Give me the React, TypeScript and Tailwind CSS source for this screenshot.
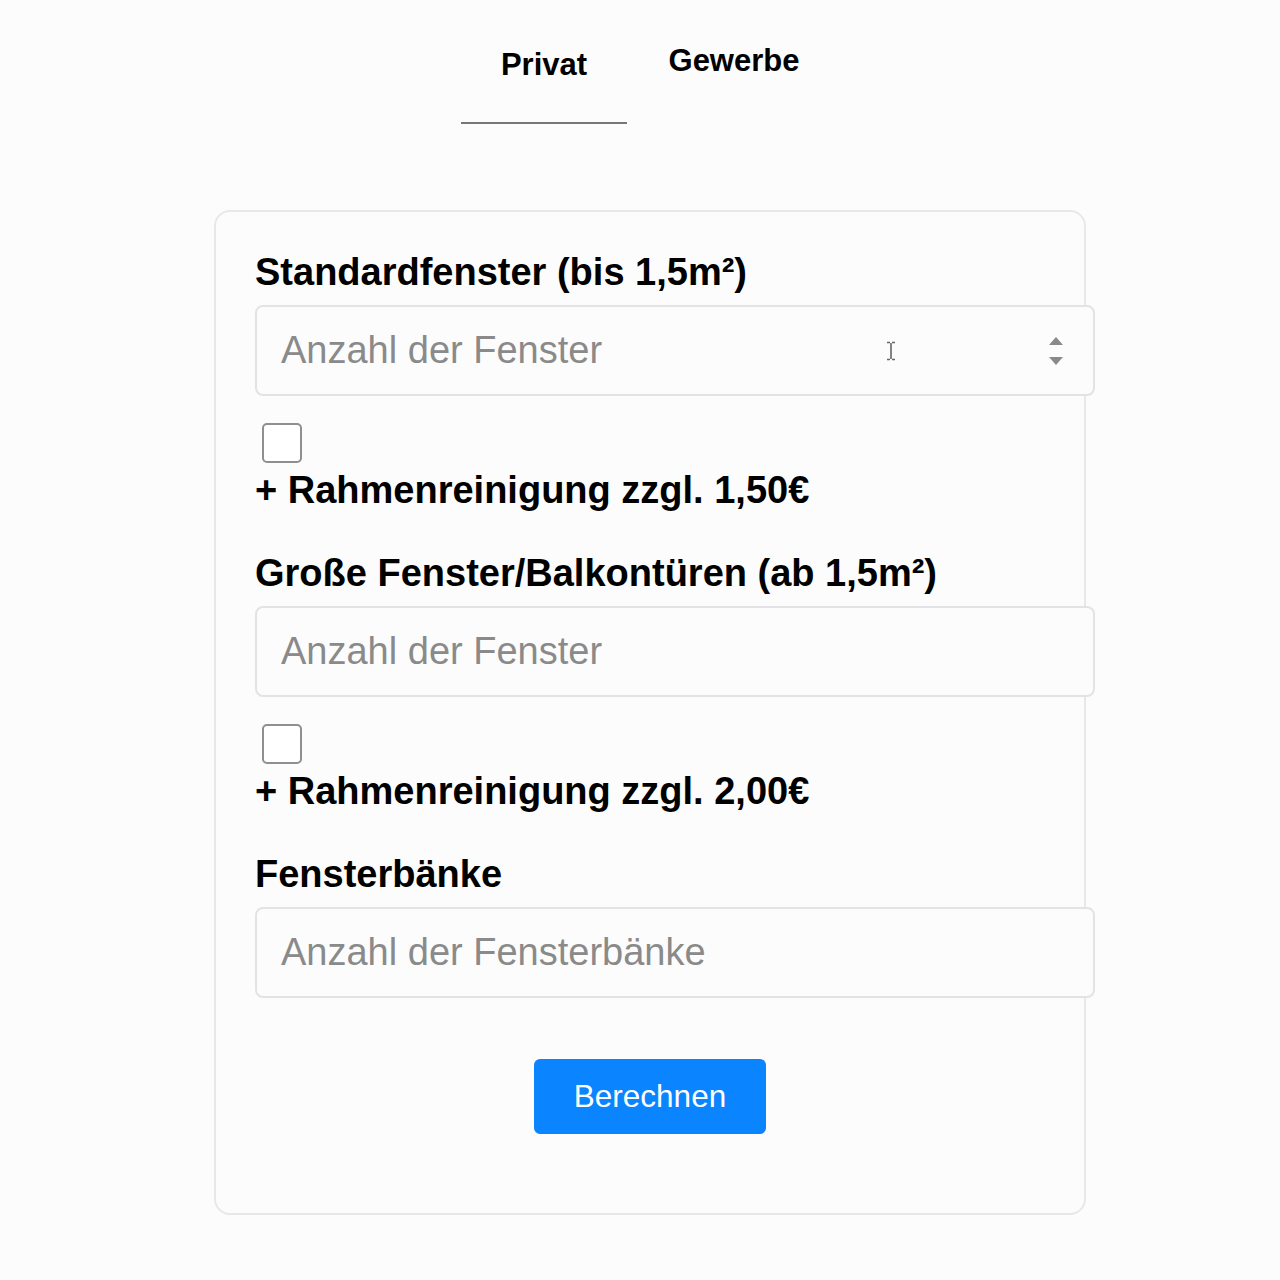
import { useState } from "react";

const font = { fontFamily: '"Liberation Sans", Arial, sans-serif' };

const Spinner = () => (
  <svg
    className="absolute right-[30px] top-[30px] pointer-events-none"
    width="18"
    height="32"
    viewBox="0 0 18 32"
  >
    <path d="M9 2 L16 10 L2 10 Z" fill="#8a8a8a" />
    <path d="M9 30 L16 22 L2 22 Z" fill="#8a8a8a" />
  </svg>
);

const Cursor = () => (
  <svg
    className="absolute left-[631px] top-[36px] pointer-events-none"
    width="10"
    height="20"
    viewBox="0 0 10 20"
  >
    <path d="M1 1.5 H4 M6 1.5 H9 M5 2 V18 M1 18.5 H4 M6 18.5 H9" stroke="#666" strokeWidth="1.6" fill="none" />
  </svg>
);

const NumberField = ({ placeholder, hover }: { placeholder: string; hover?: boolean }) => (
  <div className="relative w-[840px] mt-[11px]">
    <input
      type="number"
      placeholder={placeholder}
      className="w-[840px] h-[91px] rounded-[8px] border-2 border-[#e3e3e3] bg-[#fcfcfc] px-[24px] text-[38px] text-black placeholder:text-[#8a8a8a] outline-none [appearance:textfield] [&::-webkit-inner-spin-button]:appearance-none"
    />
    {hover && <Spinner />}
    {hover && <Cursor />}
  </div>
);

const FrameOption = ({ label }: { label: string }) => {
  const [checked, setChecked] = useState(false);
  return (
    <div className="flex flex-col">
      <input
        type="checkbox"
        checked={checked}
        onChange={() => setChecked(!checked)}
        className="appearance-none w-[40px] h-[40px] ml-[7px] mt-[27px] rounded-[5px] border-[2.5px] border-[#8f8f8f] bg-white checked:bg-[#0a84ff]"
      />
      <span className="mt-[6px] text-[38px] leading-[43px] font-bold text-black whitespace-nowrap">{label}</span>
    </div>
  );
};

export default function App() {
  const [tab, setTab] = useState<"privat" | "gewerbe">("privat");

  return (
    <div className="min-h-screen bg-[#fcfcfc] flex flex-col items-center" style={font}>
      <div className="flex gap-[24px] pt-[38px] ml-[-2px]">
        <button
          onClick={() => setTab("privat")}
          className={
            "w-[166px] h-[86px] flex justify-center pt-[4px] text-[31px] font-bold text-black " +
            (tab === "privat" ? "border-b-2 border-[#777]" : "")
          }
        >
          Privat
        </button>
        <button
          onClick={() => setTab("gewerbe")}
          className={
            "w-[166px] h-[86px] flex justify-center pt-0 text-[31px] font-bold text-black " +
            (tab === "gewerbe" ? "border-b-2 border-[#777]" : "")
          }
        >
          Gewerbe
        </button>
      </div>

      <div className="mt-[86px] ml-[20px] w-[872px] rounded-[16px] border-2 border-[#e8e8e8] px-[39px] pt-[39px] pb-[79px] flex flex-col">
        <label className="text-[38px] leading-[43px] font-bold text-black whitespace-nowrap">Standardfenster (bis 1,5m²)</label>
        <NumberField placeholder="Anzahl der Fenster" hover />
        <FrameOption label="+ Rahmenreinigung zzgl. 1,50€" />

        <label className="mt-[40px] text-[38px] leading-[43px] font-bold text-black whitespace-nowrap">
          Große Fenster/Balkontüren (ab 1,5m²)
        </label>
        <NumberField placeholder="Anzahl der Fenster" />
        <FrameOption label="+ Rahmenreinigung zzgl. 2,00€" />

        <label className="mt-[40px] text-[38px] leading-[43px] font-bold text-black whitespace-nowrap">Fensterbänke</label>
        <NumberField placeholder="Anzahl der Fensterbänke" />

        <button className="mt-[61px] self-center w-[232px] h-[75px] rounded-[6px] bg-[#0a84ff] text-white text-[31.5px]">
          Berechnen
        </button>
      </div>
    </div>
  );
}
